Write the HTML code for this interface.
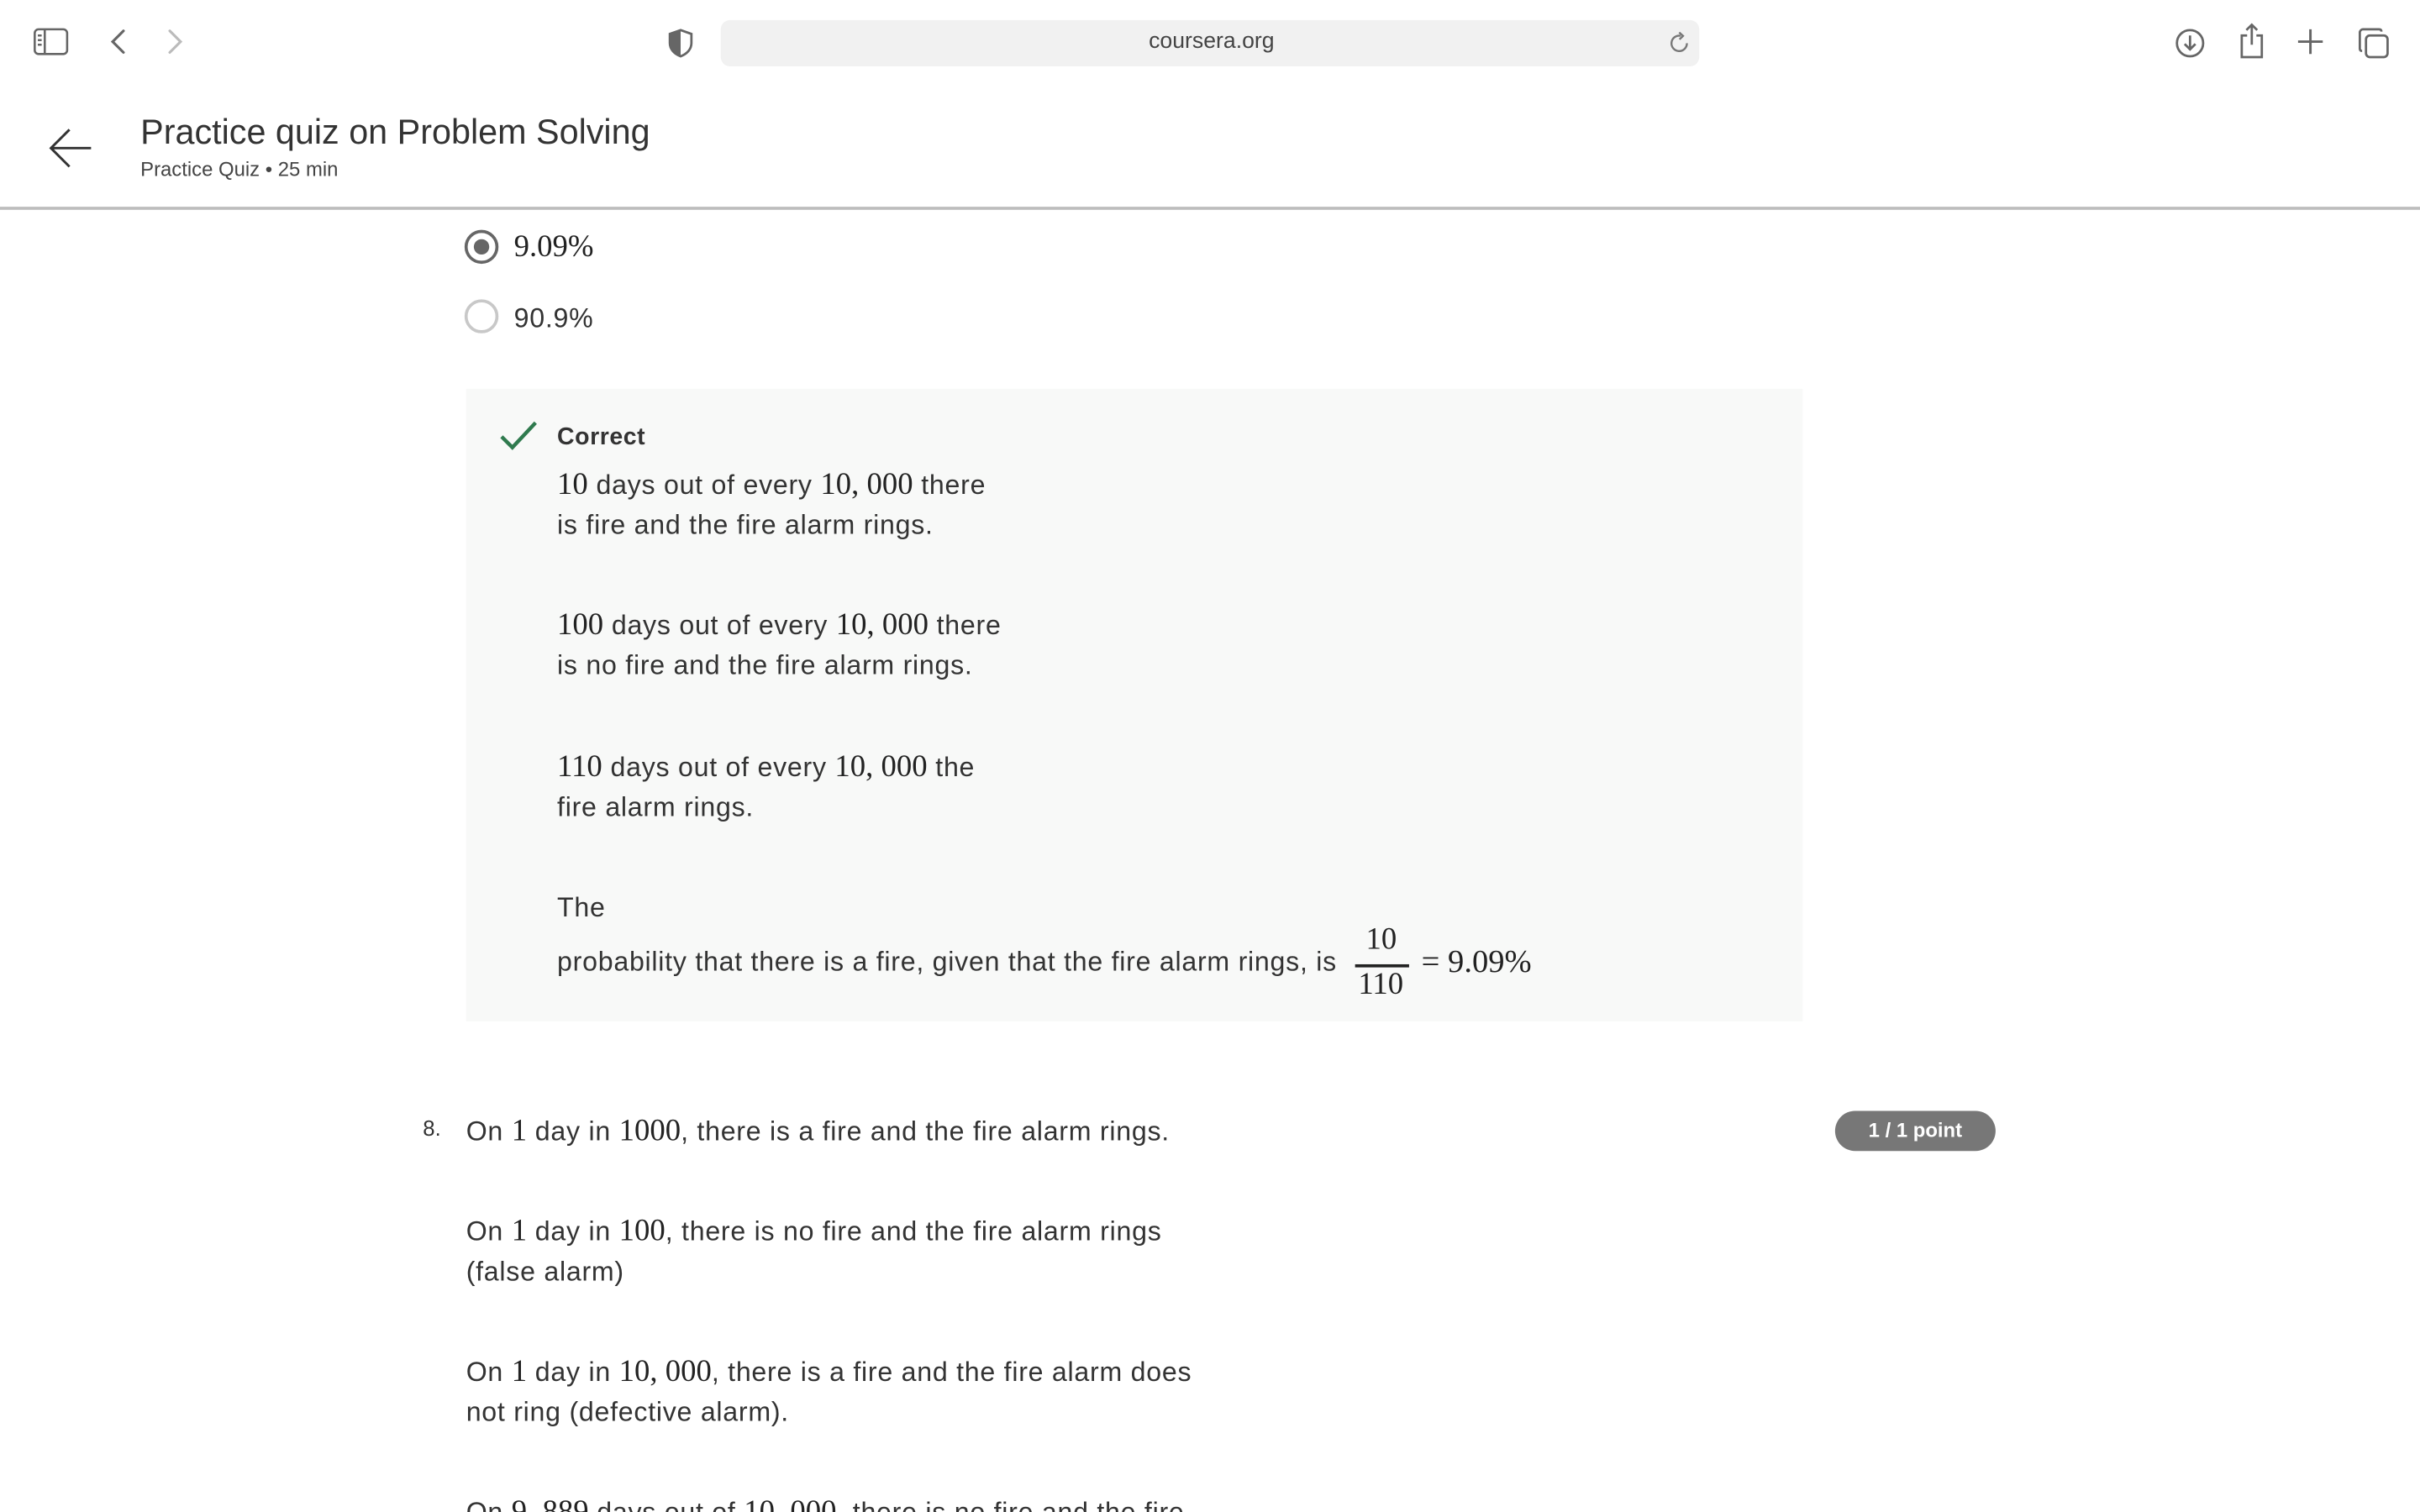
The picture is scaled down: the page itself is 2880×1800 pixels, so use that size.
<!DOCTYPE html>
<html><head><meta charset="utf-8"><style>
html,body{margin:0;padding:0;width:2880px;height:1800px;overflow:hidden;background:#fff}
#w{position:absolute;left:0;top:0;width:1568px;height:980px;transform:scale(1.836735);transform-origin:0 0;font-family:"Liberation Sans",sans-serif;color:#333;overflow:hidden}
.a{position:absolute;white-space:nowrap}
.t{font-size:17.5px;color:#333;line-height:26px;letter-spacing:0.4px}
.m{font-family:"Liberation Serif",serif;font-size:20px;color:#222;letter-spacing:0}
</style></head><body><div id="w">
<!-- toolbar -->
<svg class="a" style="left:20px;top:16px" width="26" height="22" viewBox="0 0 26 22" fill="none" stroke="#666" stroke-width="1.4"><rect x="2.5" y="3" width="21" height="16" rx="2.5"/><line x1="9" y1="3" x2="9" y2="19"/><line x1="4.5" y1="7" x2="7" y2="7"/><line x1="4.5" y1="10" x2="7" y2="10"/><line x1="4.5" y1="13" x2="7" y2="13"/></svg>
<svg class="a" style="left:68px;top:17px" width="16" height="20" viewBox="0 0 16 20" fill="none" stroke="#666" stroke-width="1.7" stroke-linecap="round"><path d="M12 3 L5 10 L12 17"/></svg>
<svg class="a" style="left:106px;top:17px" width="16" height="20" viewBox="0 0 16 20" fill="none" stroke="#bbb" stroke-width="1.7" stroke-linecap="round"><path d="M4 3 L11 10 L4 17"/></svg>
<svg class="a" style="left:432px;top:18px" width="18" height="20" viewBox="0 0 18 20"><path d="M9 1.5 L16 4 V10 C16 14 13 17 9 18.5 C5 17 2 14 2 10 V4 Z" fill="none" stroke="#666" stroke-width="1.5"/><path d="M9 1.5 V18.5 C5 17 2 14 2 10 V4 Z" fill="#666"/></svg>
<div class="a" style="left:467px;top:13px;width:634px;height:30px;background:#f1f1f1;border-radius:6px"></div>
<div class="a" style="left:467px;top:19px;width:636px;text-align:center;font-size:14.5px;color:#444">coursera.org</div>
<svg class="a" style="left:1079px;top:19px" width="18" height="18" viewBox="0 0 18 18" fill="none" stroke="#777" stroke-width="1.3"><path d="M14 9 A5 5 0 1 1 10 4.2"/><path d="M9 2 L11.5 4.3 L9.2 6.5"/></svg>
<svg class="a" style="left:1408px;top:17px" width="22" height="22" viewBox="0 0 22 22" fill="none" stroke="#666" stroke-width="1.5"><circle cx="11" cy="11" r="8.5"/><path d="M11 6 V15 M7.5 11.5 L11 15 L14.5 11.5"/></svg>
<svg class="a" style="left:1449px;top:14px" width="20" height="26" viewBox="0 0 20 26" fill="none" stroke="#666" stroke-width="1.5"><path d="M7 9 H3.5 V23 H16.5 V9 H13"/><path d="M10 2 V15 M6.5 5.5 L10 2 L13.5 5.5"/></svg>
<svg class="a" style="left:1487px;top:17px" width="20" height="20" viewBox="0 0 20 20" stroke="#666" stroke-width="1.6"><path d="M10 2 V18 M2 10 H18"/></svg>
<svg class="a" style="left:1526px;top:16px" width="24" height="24" viewBox="0 0 24 24" fill="none" stroke="#666" stroke-width="1.5"><rect x="7" y="7" width="14" height="14" rx="2.5"/><path d="M17 4.5 C17 3.5 16.5 3 15.5 3 H5 C4 3 3 4 3 5 V15.5 C3 16.5 3.5 17 4.5 17"/></svg>
<!-- header -->
<svg class="a" style="left:30px;top:81px" width="32" height="30" viewBox="0 0 32 30" fill="none" stroke="#333" stroke-width="1.6"><path d="M29 15 H3 M15 3 L3 15 L15 27"/></svg>
<div class="a" style="left:91px;top:73px;font-size:22.5px;color:#333">Practice quiz on Problem Solving</div>
<div class="a" style="left:91px;top:102px;font-size:13px;color:#444">Practice Quiz • 25 min</div>
<div class="a" style="left:0;top:134px;width:1568px;height:1.5px;background:#bdbdbd"></div>
<!-- options -->
<div class="a" style="left:301px;top:149px;width:18px;height:18px;border:2px solid #666;border-radius:50%"></div>
<div class="a" style="left:307px;top:155px;width:10px;height:10px;background:#666;border-radius:50%"></div>
<div class="a m" style="left:333px;top:149px">9.09%</div>
<div class="a" style="left:301px;top:194px;width:18px;height:18px;border:2px solid #c8c8c8;border-radius:50%"></div>
<div class="a" style="left:333px;top:196px;font-size:17.5px;color:#333;letter-spacing:0.4px">90.9%</div>
<!-- feedback -->
<div class="a" style="left:302px;top:252px;width:866px;height:410px;background:#f8f9f8"></div>
<svg class="a" style="left:323px;top:271px" width="26" height="22" viewBox="0 0 26 22" fill="none" stroke="#2f7a4e" stroke-width="2.4"><path d="M2 12 L9 19 L24 3"/></svg>
<div class="a" style="left:361px;top:275px;font-size:15.5px;font-weight:bold;color:#333;letter-spacing:0.3px">Correct</div>
<div class="a t" style="left:361px;top:301px"><span class="m">10</span> days out of every <span class="m">10, 000</span> there</div>
<div class="a t" style="left:361px;top:327px">is fire and the fire alarm rings.</div>
<div class="a t" style="left:361px;top:392px"><span class="m">100</span> days out of every <span class="m">10, 000</span> there</div>
<div class="a t" style="left:361px;top:418px">is no fire and the fire alarm rings.</div>
<div class="a t" style="left:361px;top:484px"><span class="m">110</span> days out of every <span class="m">10, 000</span> the</div>
<div class="a t" style="left:361px;top:510px">fire alarm rings.</div>
<div class="a t" style="left:361px;top:575px">The</div>
<div class="a t" style="left:361px;top:610px">probability that there is a fire, given that the fire alarm rings, is</div>
<div class="a m" style="left:885px;top:598px">10</div>
<div class="a" style="left:878px;top:625px;width:35px;height:1.5px;background:#222"></div>
<div class="a m" style="left:880px;top:627px">110</div>
<div class="a m" style="left:921px;top:611px;font-size:21px">= 9.09%</div>
<!-- Q8 -->
<div class="a" style="left:274px;top:723px;font-size:14px;color:#333">8.</div>
<div class="a t" style="left:302px;top:720px">On <span class="m">1</span> day in <span class="m">1000</span>, there is a fire and the fire alarm rings.</div>
<div class="a" style="left:1189px;top:720px;width:104px;height:26px;background:#777;border-radius:13px;color:#fff;font-size:13px;font-weight:bold;text-align:center;line-height:26px">1 / 1 point</div>
<div class="a t" style="left:302px;top:785px">On <span class="m">1</span> day in <span class="m">100</span>, there is no fire and the fire alarm rings</div>
<div class="a t" style="left:302px;top:811px">(false alarm)</div>
<div class="a t" style="left:302px;top:876px">On <span class="m">1</span> day in <span class="m">10, 000</span>, there is a fire and the fire alarm does</div>
<div class="a t" style="left:302px;top:902px">not ring (defective alarm).</div>
<div class="a t" style="left:302px;top:967px">On <span class="m">9, 889</span> days out of <span class="m">10, 000</span>, there is no fire and the fire</div>
</div></body></html>
